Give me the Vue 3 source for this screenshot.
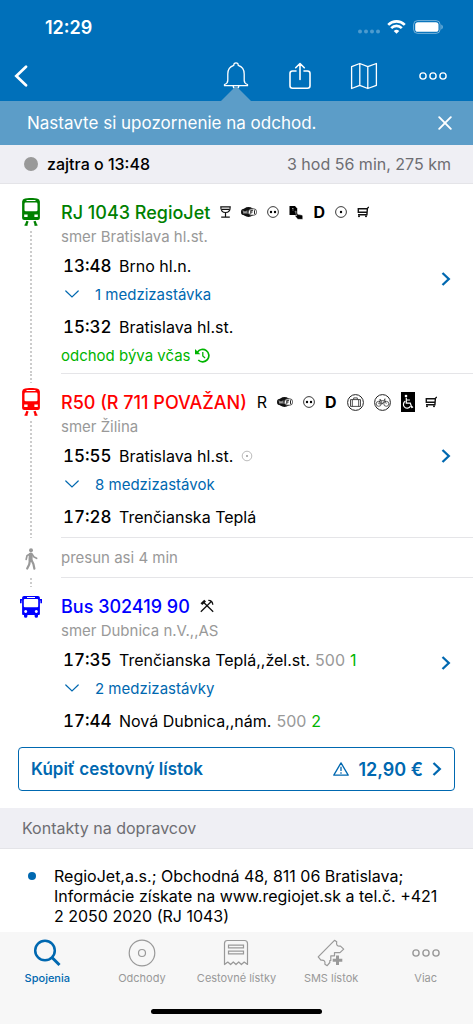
<script setup>
const legs = [
  {
    kind: 'train', color: 'green', title: 'RJ 1043 RegioJet', direction: 'smer Bratislava hl.st.',
    services: ['wine', 'wifi', 'face', 'doc', 'D', 'dot', 'cart'],
    from: { time: '13:48', name: 'Brno hl.n.' }, between: '1 medzizastávka',
    to: { time: '15:32', name: 'Bratislava hl.st.' }, note: 'odchod býva včas'
  },
  {
    kind: 'train', color: 'red', title: 'R50 (R 711 POVAŽAN)', direction: 'smer Žilina',
    services: ['R', 'wifi', 'face', 'D', 'bag', 'bike', 'chair', 'cart'],
    from: { time: '15:55', name: 'Bratislava hl.st.', mark: true }, between: '8 medzizastávok',
    to: { time: '17:28', name: 'Trenčianska Teplá' }
  },
  { kind: 'walk', title: 'presun asi 4 min' },
  {
    kind: 'bus', color: 'blue', title: 'Bus 302419 90', direction: 'smer Dubnica n.V.,,AS',
    services: ['tools'],
    from: { time: '17:35', name: 'Trenčianska Teplá,,žel.st.', zone: '500', platform: '1' }, between: '2 medzizastávky',
    to: { time: '17:44', name: 'Nová Dubnica,,nám.', zone: '500', platform: '2' }
  }
]
const tabs = [
  { id: 'search', label: 'Spojenia', active: true },
  { id: 'departures', label: 'Odchody' },
  { id: 'tickets', label: 'Cestovné lístky' },
  { id: 'sms', label: 'SMS lístok' },
  { id: 'more', label: 'Viac' }
]
</script>

<template>
  <div class="app">
    <header class="header">
      <div class="status">
        <span class="clock">12:29</span>
        <span class="signals">
          <svg width="22" height="5" viewBox="0 0 22 5" fill="#fff" opacity=".3"><circle cx="2" cy="2.5" r="2" /><circle cx="8" cy="2.5" r="2" /><circle cx="14" cy="2.5" r="2" /><circle cx="20" cy="2.5" r="2" /></svg>
          <svg width="19" height="14" viewBox="0 0 19 14" fill="none" stroke="#fff" stroke-width="2.6">
            <path d="M1.2 4.8a11.8 11.8 0 0 1 16.6 0M4.2 8.1a7.5 7.5 0 0 1 10.6 0" />
            <path d="M9.5 13.8 6.7 11a4 4 0 0 1 5.600 0z" fill="#fff" stroke="none" />
          </svg>
          <svg width="30" height="14" viewBox="0 0 30 14"><rect x=".6" y=".6" width="26.5" height="12.8" rx="4" fill="none" stroke="#fff" stroke-opacity=".45" /><rect x="2.2" y="2.2" width="23.3" height="9.6" rx="2.6" fill="#fff" /><path d="M28.4 4.6v4.8q1.4-.8 1.4-2.4t-1.4-2.4z" fill="#fff" opacity=".5" /></svg>
        </span>
      </div>
      <nav class="toolbar">
        <button class="tool back" aria-label="Späť">
          <svg width="14" height="22" viewBox="0 0 14 22" fill="none" stroke="#fff" stroke-width="2.7" stroke-linecap="round"><path d="M12 1.8 2.3 11l9.7 9.2" /></svg>
        </button>
        <button class="tool" aria-label="Upozornenie">
          <svg width="26" height="28" viewBox="0 0 26 28" fill="none" stroke="#fff" stroke-width="1.3" stroke-linejoin="round"><path d="M10.8 3.4C10.7 1.8 11.6.9 13 .9s2.3.9 2.2 2.5c3.900 1.200 6 4.200 6 8.600v6.200c0 2.200 1 3.500 3.300 4.300v1.200H1.500v-1.200c2.300-.8 3.300-2.100 3.300-4.300V12c0-4.400 2.100-7.400 6-8.600zM10.200 24.200q.4 2.600 2.800 2.600t2.800-2.600" /></svg>
          <span class="pointer"></span>
        </button>
        <button class="tool" aria-label="Zdieľať">
          <svg width="24" height="28" viewBox="0 0 24 28" fill="none" stroke="#fff" stroke-width="1.6" stroke-linecap="round" stroke-linejoin="round"><path d="M8 9H4.500Q2 9 2 11.500v12.300q0 2.500 2.500 2.500h15q2.500 0 2.500-2.500V11.500Q22 9 19.500 9H16M12 17.500V1.500M7.700 5.700 12 1.500l4.300 4.200" /></svg>
        </button>
        <button class="tool" aria-label="Mapa">
          <svg width="28" height="28" viewBox="0 0 28 28" fill="none" stroke="#fff" stroke-width="1.3" stroke-linejoin="round"><path d="m1.600 4.700 8.200-3.200 8 3.200 8.600-3.200v21.800l-8.600 3.200-8-3.200-8.200 3.200zM9.800 1.500v21.800M17.800 4.700v21.800" /></svg>
        </button>
        <button class="tool more" aria-label="Viac možností">
          <svg width="28" height="10" viewBox="0 0 28 10" fill="none" stroke="#fff" stroke-width="1.4"><circle cx="4" cy="5" r="3.1" /><circle cx="14" cy="5" r="3.1" /><circle cx="24" cy="5" r="3.1" /></svg>
        </button>
      </nav>
    </header>

    <aside class="banner">
      <span>Nastavte si upozornenie na odchod.</span>
      <button class="close" aria-label="Zavrieť"><svg width="14" height="14" viewBox="0 0 14 14" stroke="#fff" stroke-width="1.9" stroke-linecap="round"><path d="m1.200 1.200 11.600 11.600M12.800 1.200 1.200 12.800" /></svg></button>
    </aside>

    <main class="content">
      <div class="summary"><span class="bullet"></span><strong>zajtra o 13:48</strong><span class="duration">3 hod 56 min, 275 km</span></div>

      <section v-for="(leg, i) in legs" :key="leg.title" class="leg" :class="[leg.kind, leg.color]">
        <div class="rail">
          <span class="lead" :class="{ dotted: i > 0 && leg.kind !== 'walk' }"></span>
          <svg v-if="leg.kind === 'train'" class="vehicle" width="20" height="28" viewBox="0 0 20 28">
            <path fill="currentColor" fill-rule="evenodd" d="M4 .5Q10-.6 16 .5q2.700.4 2.900 3V20q0 2-2 2H3.100q-2 0-2-2V3.500Q1.300.9 4 .5zM5.500 1.900v1.200h9V1.900zM4.800 4.600q-1.300 0-1.300 1.300v6q0 1.300 1.300 1.300h10.400q1.300 0 1.300-1.300v-6q0-1.300-1.300-1.300zM3.200 16.500v2.400h3.400v-2.400zM13.400 16.500v2.400h3.400v-2.400z" />
            <path d="M6.500 23.200 5 27.200M13.500 23.200l1.500 4" stroke="currentColor" stroke-width="2.4" /><path d="M3.500 27.200h3M13.500 27.200h3" stroke="currentColor" stroke-width="1.2" />
          </svg>
          <svg v-else-if="leg.kind === 'bus'" class="vehicle" width="22" height="28" viewBox="0 0 22 28">
            <path fill="currentColor" fill-rule="evenodd" d="M4 4h14q1.800 0 1.900 1.800v16.100q0 1-1 1H18v1.300q0 1.500-1.700 1.500t-1.700-1.500v-1.300H7.400v1.300q0 1.500-1.700 1.500T4 24.200v-1.300h-.9q-1 0-1-1V5.800Q2.200 4 4 4zM7 5v1h8V5zM4.800 7.100q-1 0-1 1v6.200q0 1 1 1h12.400q1 0 1-1V8.100q0-1-1-1zM5.700 18a1.500 1.500 0 1 0 .01 0zM16.300 18a1.500 1.500 0 1 0 .01 0z" />
            <path d="M2.500 7.700H.8v3.600M19.500 7.700h1.700v3.600" fill="none" stroke="currentColor" stroke-width="1.600" />
          </svg>
          <svg v-else class="walker" width="14" height="22" viewBox="0 0 14 22" fill="none" stroke="#999" stroke-linecap="round" stroke-linejoin="round"><circle cx="7" cy="2.2" r="2" fill="#999" stroke="none" /><path d="M6.800 6.600 6.500 12" stroke-width="4" /><path d="M5.800 6 3 7.800l-.8 3.600M8.300 6.400l1.800 2.700 2.500 1.200" stroke-width="1.700" /><path d="m5.900 12.500-.7 4-2 4M7.700 12.500l1.700 3.500 1 4.700" stroke-width="2.200" /></svg>
          <span v-if="leg.kind === 'train'" class="trail dotted"></span>
        </div>
        <div class="panel">
          <p v-if="leg.kind === 'walk'" class="transfer">{{ leg.title }}</p>
          <template v-else>
            <div class="details">
              <div class="heading">
                <h2>{{ leg.title }}</h2>
                <template v-for="s in leg.services" :key="s">
                  <b v-if="s === 'D'" class="letter">D</b>
                  <span v-else-if="s === 'R'" class="letter">R</span>
                  <svg v-else-if="s === 'wine'" width="11" height="12" viewBox="0 0 11 12" fill="none" stroke="#111" stroke-width="1.2"><path d="M.8.8h9.400q0 5.700-4.700 5.700T.8.8zM2 3.300h7M5.500 6.500v4.300M1.200 11.200h8.600" /></svg>
                  <svg v-else-if="s === 'wifi'" width="16" height="12" viewBox="0 0 16 12"><ellipse cx="7.500" cy="6" rx="5.700" ry="5" fill="#111" /><rect y="2.700" width="11" height="6.600" rx="3.300" fill="#111" /><rect x="7.500" y="2.800" width="8" height="6.400" rx="2.800" fill="#fff" stroke="#222" stroke-width=".8" /><path d="m2 4.500 1 3 1-2.300 1 2.300 1-3M7 5.500v2.300" fill="none" stroke="#ddd" stroke-width=".7" /><path d="M9.800 7.900V4.300h2.300M9.800 6h1.800M13.500 4.300v3.600" fill="none" stroke="#222" stroke-width="1" /></svg>
                  <svg v-else-if="s === 'face'" width="12" height="12" viewBox="0 0 12 12"><circle cx="6" cy="6" r="5.400" fill="none" stroke="#222" stroke-width=".9" /><circle cx="4" cy="6" r="1.200" /><circle cx="8" cy="6" r="1.200" /></svg>
                  <svg v-else-if="s === 'doc'" width="14" height="15" viewBox="0 0 14 15"><path d="M.5 1H6l2.200 2.500V10H.5z" /><path d="M3 3.500h1.500M3.500 5h1" stroke="#fff" stroke-width=".6" /><path d="M6 6.300q1.200-.5 1.700.7l1 2.300 4 .8q1 .3 1 1.400v2.800H8.800L6 10.900q.8-1 1.700-.2z" stroke="#fff" stroke-width=".4" /></svg>
                  <svg v-else-if="s === 'dot'" width="12" height="12" viewBox="0 0 12 12"><circle cx="6" cy="6" r="5.400" fill="none" stroke="#222" stroke-width=".9" /><circle cx="6" cy="6" r="1.200" /></svg>
                  <svg v-else-if="s === 'cart'" width="12" height="12" viewBox="0 0 12 12" fill="none" stroke="#111" stroke-width="1.4"><path d="M11.900 1 10.400 2.300 9.900 8.800H1M10.400 2.700H1.300V6.300H10" /><circle cx="2" cy="10.200" r="1" fill="#111" stroke="none" /><circle cx="9" cy="10.200" r="1" fill="#111" stroke="none" /></svg>
                  <svg v-else-if="s === 'bag'" width="17" height="17" viewBox="0 0 17 17" fill="none" stroke="#222"><circle cx="8.500" cy="8.500" r="7.900" stroke-width="1" /><path d="M3.500 5.600h10v6.800h-10zM5.300 5.600v6.800M11.700 5.600v6.800M6.700 5.600V3.900h3.600v1.700" stroke-width=".8" /></svg>
                  <svg v-else-if="s === 'bike'" width="17" height="17" viewBox="0 0 17 17" fill="none" stroke="#222"><circle cx="8.500" cy="8.500" r="7.900" stroke-width="1" /><g stroke-width=".7"><circle cx="4.700" cy="9.800" r="2.500" /><circle cx="12.300" cy="9.800" r="2.500" /><path d="m4.700 9.800 1.600-4 2.200 4zM6.700 6.700h4L8.500 9.800M12.300 9.800l-2-4.700h1.400M5.400 5.700h1.700" /></g></svg>
                  <svg v-else-if="s === 'chair'" width="14" height="20" viewBox="0 0 14 20" fill="none" stroke="#fff" stroke-width="1.2"><path d="M0 0h14v20H0z" fill="#000" stroke="none" /><circle cx="5" cy="4" r="1.300" fill="#fff" stroke="none" /><path d="M5.300 5.700v5.500h4l1.500 4.200 1.300-.5M5.500 8h3.400M4.200 9.300a3.700 3.700 0 1 0 5.200 4.900" /></svg>
                  <svg v-else width="14" height="14" viewBox="0 0 14 14" fill="none" stroke="#111" stroke-width="1.3"><path d="M.8 12.800 11.300 2.500M13.200 12.800 3.500 3.200M8.300 1.300q4.200-.1 4.500 4.500" /><path d="M.5 4.200 4.300.8 6 2.500 2.300 6z" fill="#111" stroke="none" /></svg>
                </template>
              </div>
              <p class="direction">{{ leg.direction }}</p>
              <div class="stop"><time>{{ leg.from.time }}</time><span>{{ leg.from.name }}</span>
                <svg v-if="leg.from.mark" class="mark" width="12" height="12" viewBox="0 0 12 12"><circle cx="6" cy="6" r="4.800" fill="none" stroke="#aaa" stroke-width=".8" /><circle cx="6" cy="6" r="1" fill="#999" /></svg>
                <span v-if="leg.from.zone" class="zone">{{ leg.from.zone }}</span><span v-if="leg.from.platform" class="platform">{{ leg.from.platform }}</span>
              </div>
              <button class="between"><svg width="14" height="8" viewBox="0 0 14 8" fill="none" stroke="currentColor" stroke-width="1.2" stroke-linecap="round"><path d="m.8 1 6.200 6L13.200 1" /></svg>{{ leg.between }}</button>
              <div class="stop"><time>{{ leg.to.time }}</time><span>{{ leg.to.name }}</span>
                <span v-if="leg.to.zone" class="zone">{{ leg.to.zone }}</span><span v-if="leg.to.platform" class="platform">{{ leg.to.platform }}</span>
              </div>
              <p v-if="leg.note" class="note">{{ leg.note }}
                <svg width="15" height="15" viewBox="0 0 15 15" fill="none" stroke="currentColor" stroke-width="1.700"><path d="M2.400 4.300A6.200 6.200 0 1 1 3.300 12" /><path d="M0 1v5.300h5.300z" fill="currentColor" stroke="none" /><path d="M7.800 4v4l2.300 2" stroke-width="1.3" /></svg>
              </p>
            </div>
            <button class="open" aria-label="Detail spoja"><svg width="10" height="14" viewBox="0 0 10 14" fill="none" stroke="currentColor" stroke-width="2.3"><path d="m1.500 1 6.300 6-6.300 6" /></svg></button>
          </template>
        </div>
      </section>

      <button class="buy">
        <span class="buy-label">Kúpiť cestovný lístok</span>
        <svg width="16" height="14" viewBox="0 0 16 14" fill="none" stroke="currentColor" stroke-width="1.3" stroke-linejoin="round"><path d="m8 .9 7.200 12.300H.8zM8 4.800v4.300M8 10.200v1.500" /></svg>
        <span class="price">12,90 €</span>
        <svg width="10" height="14" viewBox="0 0 10 14" fill="none" stroke="currentColor" stroke-width="2.3"><path d="m1.500 1 6.300 6-6.300 6" /></svg>
      </button>

      <h3 class="section-title">Kontakty na dopravcov</h3>
      <ul class="contacts">
        <li>RegioJet,a.s.; Obchodná 48, 811 06 Bratislava; Informácie získate na www.regiojet.sk a tel.č. +421 2 2050 2020 (RJ 1043)</li>
      </ul>
    </main>

    <footer class="footer">
      <nav class="tabs">
        <button v-for="tab in tabs" :key="tab.id" class="tab" :class="{ active: tab.active }">
          <svg width="28" height="28" viewBox="0 0 28 28" fill="none" stroke="currentColor" stroke-width="1.2">
            <g v-if="tab.id === 'search'" stroke-width="2.500"><circle cx="12" cy="11.500" r="9.800" /><path d="m19 18.500 7.500 7.500" stroke-width="3" /></g>
            <g v-else-if="tab.id === 'departures'"><circle cx="14" cy="14" r="12.800" /><circle cx="14" cy="14" r="3.500" /></g>
            <g v-else-if="tab.id === 'tickets'"><path d="M2.500 25.500V4.500q0-3 3-3h17q3 0 3 3v21l-3.300-2.500-2.800 2.500-2.700-2.500-2.700 2.500-2.700-2.500-2.700 2.500-2.800-2.500z" stroke-linejoin="round" /><path d="M6.500 6.200h15v2.600h-15zM6.500 12.200h15v2.600h-15z" /></g>
            <g v-else-if="tab.id === 'sms'"><path d="M1.200 17.800 17.500 1.300l2.200 1.500q-1 5 3.800 4.300l3.200 3-3.700 3.500h-5.500v3.200h-3.700v4.700h-1v2l-2.600 3.200-2.300-1.500q.8-4.600-4-4z" stroke-linejoin="round" /><path d="M20.500 16.500v9.500M15.700 21.200h9.600" stroke-width="3" /></g>
            <g v-else stroke-width="1.400"><circle cx="4" cy="14" r="3.100" /><circle cx="14" cy="14" r="3.100" /><circle cx="24" cy="14" r="3.100" /></g>
          </svg>
          <span>{{ tab.label }}</span>
        </button>
      </nav>
      <div class="home"></div>
    </footer>
  </div>
</template>

<style>
body { margin: 0; }
</style>

<style scoped>
.app { height: 100vh; display: flex; flex-direction: column; overflow: hidden; background: #fff; color: #000; font-family: Inter, "Liberation Sans", sans-serif; font-size: 16px; }
button { border: 0; padding: 0; background: none; font: inherit; color: inherit; cursor: pointer; }
svg { display: block; flex: none; }
p, h2, h3, ul { margin: 0; padding: 0; }
.header { flex: none; background: #0070ba; color: #fff; }
.status { height: 52px; display: flex; align-items: center; justify-content: space-between; padding: 2px 30px 0 45px; box-sizing: border-box; }
.clock { font-size: 18px; font-weight: 600; }
.signals { display: flex; align-items: center; gap: 7px; }
.signals svg:first-child { align-self: flex-end; }
.toolbar { height: 49px; display: flex; align-items: center; justify-content: flex-end; gap: 36px; padding: 0 26px 0 14px; }
.tool { position: relative; width: 28px; height: 49px; padding-bottom: 2px; box-sizing: border-box; display: flex; align-items: center; justify-content: center; }
.back { margin-right: auto; width: 14px; }
.more { margin-left: 5px; }
.pointer { position: absolute; bottom: 0; left: 50%; margin-left: -15px; border: 15px solid transparent; border-top: 0; border-bottom-color: #5c9dc8; }
.banner { flex: none; height: 44px; display: flex; align-items: center; justify-content: space-between; padding: 0 21px 0 27px; background: #5c9dc8; color: #fff; font-size: 17px; }
.content { flex: 1; min-height: 0; overflow-y: auto; scrollbar-width: none; }
.summary { height: 38px; display: flex; align-items: center; padding: 0 22px 0 24px; background: #efeff4; border-bottom: 1px solid #e4e4e8; }
.summary strong { font-weight: 500; }
.bullet { width: 14px; height: 14px; border-radius: 50%; background: #999; margin-right: 9px; }
.duration { margin-left: auto; color: #6d6d72; }
.leg { display: flex; }
.rail { width: 61px; flex: none; display: flex; flex-direction: column; align-items: center; }
.lead { height: 9px; width: 2px; margin-bottom: 5px; }
.trail { flex: 1; width: 2px; margin-top: 5px; }
.dotted { background: repeating-linear-gradient(#ccc 0 2px, transparent 2px 4px); }
.green .rail, .green h2 { color: #008000; }
.red .rail, .red h2 { color: #f00; }
.blue .rail, .blue h2 { color: #00f; }
.walk .lead { height: 5px; }
.panel { flex: 1; min-width: 0; display: flex; align-items: center; border-bottom: 1px solid #e5e5e8; }
.bus .panel { border-bottom: 0; }
.details { flex: 1; min-width: 0; padding: 14px 0 2px; }
.green .details, .blue .details { padding-bottom: 8px; }
.heading { height: 28px; display: flex; align-items: center; gap: 10px; }
h2 { font-size: 18px; font-weight: 500; white-space: nowrap; }
.letter { font-size: 16px; }
.direction { line-height: 22px; font-size: 15px; color: #999; }
.stop { height: 36px; display: flex; align-items: center; gap: 5px; padding-left: 2px; white-space: nowrap; }
.stop time { width: 51px; font-size: 17px; font-weight: 500; font-variant-numeric: tabular-nums; }
.mark { margin-left: 3px; }
.zone { color: #999; }
.platform { color: #00b400; }
.between { display: flex; align-items: center; gap: 16px; height: 20px; margin: 0 0 5px 4px; font-size: 15px; color: #0068b0; }
.note { height: 20px; display: flex; align-items: center; gap: 4px; font-size: 15px; color: #00b400; }
.open { width: 32px; height: 44px; color: #0068b0; }
.transfer { line-height: 39px; font-size: 15px; color: #999; }
.buy { width: calc(100% - 36px); height: 44px; margin: 0 18px 17px; padding: 0 12px; display: flex; align-items: center; border: 1px solid #0068b0; border-radius: 4px; color: #0068b0; font-size: 18px; font-weight: 600; }
.buy-label { margin-right: auto; font-size: 17px; }
.price { margin: 0 9px; }
.section-title { height: 40px; line-height: 40px; padding-left: 22px; background: #efeff4; border-bottom: 1px solid #e4e4e8; color: #6d6d72; font-size: 16px; font-weight: 400; }
.contacts { list-style: none; padding: 17px 22px 17px 54px; }
.contacts li { position: relative; line-height: 20px; }
.contacts li::before { content: ""; position: absolute; left: -26px; top: 6px; width: 8px; height: 8px; border-radius: 50%; background: #0068b0; }
.footer { flex: none; height: 92px; display: flex; flex-direction: column; justify-content: space-between; align-items: center; background: #f7f7f7; }
.tabs { display: flex; align-self: stretch; padding-top: 7px; }
.tab { flex: 1 1 0; min-width: 0; display: flex; flex-direction: column; align-items: center; gap: 4px; color: #999; font-size: 11px; line-height: 14px; white-space: nowrap; }
.active { color: #0068b0; font-weight: 500; }
.home { width: 36%; height: 5px; margin-bottom: 10px; border-radius: 3px; background: #000; }
</style>
